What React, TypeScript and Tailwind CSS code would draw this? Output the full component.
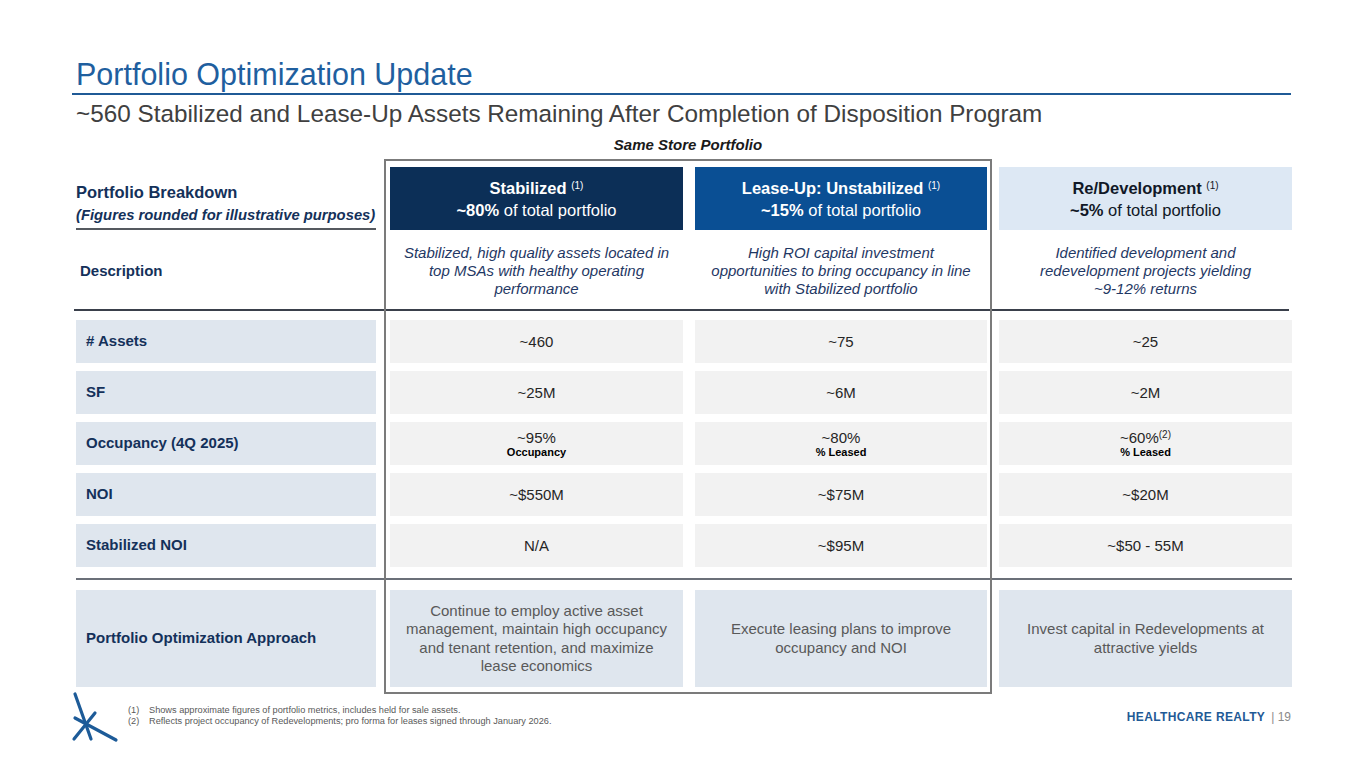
import React from 'react';

const cols = 'grid grid-cols-[302px_293px_292px_293px] gap-x-3';

const rows = [
  { label: '# Assets', values: ['~460', '~75', '~25'] },
  { label: 'SF', values: ['~25M', '~6M', '~2M'] },
  { label: 'Occupancy (4Q 2025)', values: ['~95%', '~80%', '~60%'], subs: ['Occupancy', '% Leased', '% Leased'] },
  { label: 'NOI', values: ['~$550M', '~$75M', '~$20M'] },
  { label: 'Stabilized NOI', values: ['N/A', '~$95M', '~$50 - 55M'] },
];

function Logo() {
  return (
    <svg width="52" height="52" viewBox="0 0 52 52" fill="none" stroke="#1d5b98" strokeWidth="3.2" strokeLinecap="round">
      <path d="M5 3 L21 48" />
      <path d="M5 27 L46 49" />
      <path d="M25 22 L4 48" />
    </svg>
  );
}

export default function App() {
  return (
    <div className="w-[1365px] h-[767px] bg-white relative overflow-hidden font-['Liberation_Sans',Arial,sans-serif]">
      {/* titre */}
      <div className="pl-[76px] pt-[57px]">
        <h1 className="text-[30.5px] leading-[34px] text-[#1f5f9f]">Portfolio Optimization Update</h1>
      </div>
      <div className="ml-[72px] mt-[2px] w-[1219px] h-[2px] bg-[#1f5a96]" />
      <div className="pl-[76px] pt-[5px]">
        <h2 className="text-[24.3px] leading-[28px] text-[#404040]">
          ~560 Stabilized and Lease-Up Assets Remaining After Completion of Disposition Program
        </h2>
      </div>
      <div className="ml-[384px] w-[608px] text-center pt-[8px] text-[15px] leading-[18px] font-bold italic text-[#1a1a1a]">
        Same Store Portfolio
      </div>

      {/* tableau */}
      <div className="relative ml-[76px] mt-[13px]">
        <div className="absolute left-[308px] top-[-8px] w-[608px] h-[535px] border-2 border-[#7b7b7b] pointer-events-none z-10" />

        {/* en-tete */}
        <div className={cols}>
          <div className="w-[300px] h-[63px] flex flex-col justify-end border-b-2 border-[#55595f] pb-[2px]">
            <div className="text-[16.5px] leading-[24px] font-bold text-[#14315a] whitespace-nowrap">Portfolio Breakdown</div>
            <div className="text-[14.8px] leading-[22px] font-bold italic text-[#14315a] whitespace-nowrap">(Figures rounded for illustrative purposes)</div>
          </div>
          <div className="h-[63px] bg-[#0c2f57] text-white flex flex-col items-center justify-center text-[16.5px] leading-[22px]">
            <div><span className="font-bold">Stabilized</span> <sup className="text-[10px]">(1)</sup></div>
            <div><span className="font-bold">~80%</span> of total portfolio</div>
          </div>
          <div className="h-[63px] bg-[#0a4f94] text-white flex flex-col items-center justify-center text-[16.5px] leading-[22px]">
            <div><span className="font-bold">Lease-Up: Unstabilized</span> <sup className="text-[10px]">(1)</sup></div>
            <div><span className="font-bold">~15%</span> of total portfolio</div>
          </div>
          <div className="h-[63px] bg-[#dde8f4] text-[#111827] flex flex-col items-center justify-center text-[16.5px] leading-[22px]">
            <div><span className="font-bold">Re/Development</span> <sup className="text-[10px]">(1)</sup></div>
            <div><span className="font-bold">~5%</span> of total portfolio</div>
          </div>
        </div>

        {/* description */}
        <div className={`${cols} h-[79px] items-center pt-[3px]`}>
          <div className="pl-[4px] text-[15px] font-bold text-[#14315a]">Description</div>
          <div className="text-center italic text-[15px] leading-[18px] text-[#1f3864]">
            Stabilized, high quality assets located in<br />top MSAs with healthy operating<br />performance
          </div>
          <div className="text-center italic text-[15px] leading-[18px] text-[#1f3864]">
            High ROI capital investment<br />opportunities to bring occupancy in line<br />with Stabilized portfolio
          </div>
          <div className="text-center italic text-[15px] leading-[18px] text-[#1f3864]">
            Identified development and<br />redevelopment projects yielding<br />~9-12% returns
          </div>
        </div>
        <div className="w-[1215px] -ml-[2px] h-[2px] bg-[#3a404b]" />

        {/* lignes */}
        <div className="flex flex-col gap-[8px] pt-[9px]">
          {rows.map((r) => (
            <div key={r.label} className={cols}>
              <div className="w-[300px] h-[43px] bg-[#dfe6ee] flex items-center pl-[10px] text-[15px] font-bold text-[#14315a]">
                {r.label}
              </div>
              {r.values.map((v, i) => (
                <div key={i} className="h-[43px] bg-[#f2f2f2] flex flex-col items-center justify-center text-[#262626]">
                  <div className="text-[15px] leading-[17px]">
                    {v}
                    {r.subs && i === 2 && <sup className="text-[10px]">(2)</sup>}
                  </div>
                  {r.subs && <div className="text-[11px] leading-[13px] font-bold text-black">{r.subs[i]}</div>}
                </div>
              ))}
            </div>
          ))}
        </div>
        <div className="w-[1216px] mt-[11px] h-[2px] bg-[#6b7079]" />

        {/* approche */}
        <div className={`${cols} pt-[10px]`}>
          <div className="w-[300px] h-[97px] bg-[#dfe6ee] flex items-center pl-[10px] text-[15px] font-bold text-[#14315a]">
            Portfolio Optimization Approach
          </div>
          <div className="h-[97px] bg-[#dfe6ee] flex items-center justify-center text-center text-[15px] leading-[18.5px] text-[#595959]">
            <p>Continue to employ active asset<br />management, maintain high occupancy<br />and tenant retention, and maximize<br />lease economics</p>
          </div>
          <div className="h-[97px] bg-[#dfe6ee] flex items-center justify-center text-center text-[15px] leading-[18.5px] text-[#595959]">
            <p>Execute leasing plans to improve<br />occupancy and NOI</p>
          </div>
          <div className="h-[97px] bg-[#dfe6ee] flex items-center justify-center text-center text-[15px] leading-[18.5px] text-[#595959]">
            <p>Invest capital in Redevelopments at<br />attractive yields</p>
          </div>
        </div>
      </div>

      {/* pied de page */}
      <div className="flex items-start pl-[70px] pt-[4px]">
        <Logo />
        <div className="pl-[6px] pt-[14px] text-[9.2px] leading-[11px] text-[#595959]">
          <div className="flex"><span className="w-[21px]">(1)</span><span>Shows approximate figures of portfolio metrics, includes held for sale assets.</span></div>
          <div className="flex"><span className="w-[21px]">(2)</span><span>Reflects project occupancy of Redevelopments; pro forma for leases signed through January 2026.</span></div>
        </div>
        <div className="ml-auto mr-[74px] pt-[17px] flex items-center text-[12px]">
          <span className="font-bold tracking-[0.03em] text-[#1f5a96]">HEALTHCARE REALTY</span>
          <span className="text-[#8a8a8a] pl-[6px]">| 19</span>
        </div>
      </div>
    </div>
  );
}
